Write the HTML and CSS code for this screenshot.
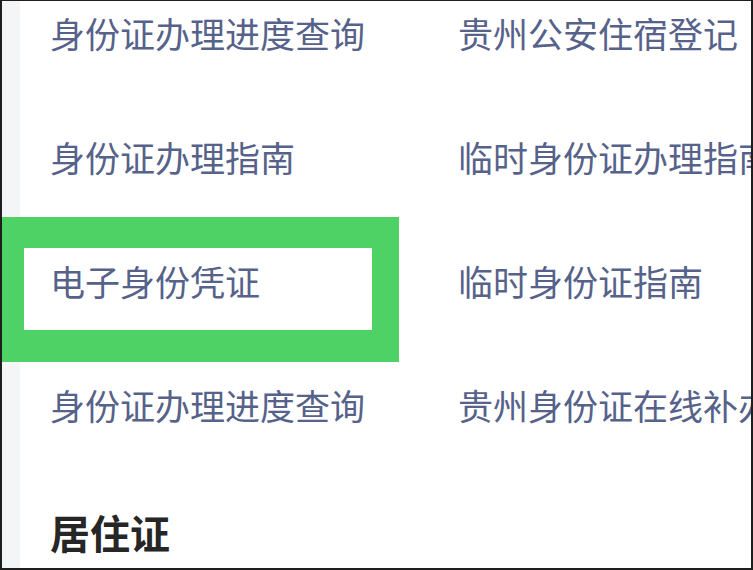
FILE: index.html
```html
<!DOCTYPE html>
<html lang="zh-CN">
<head>
<meta charset="utf-8">
<title>身份证服务</title>
<link rel="stylesheet" href="styles.css">
</head>
<body>
<div class="frame">
  <div class="rail"></div>
  <div class="content">
    <div class="links">
      <a class="link">身份证办理进度查询</a>
      <a class="link">贵州公安住宿登记</a>
      <a class="link">身份证办理指南</a>
      <a class="link">临时身份证办理指南</a>
      <a class="link">电子身份凭证</a>
      <a class="link">临时身份证指南</a>
      <a class="link">身份证办理进度查询</a>
      <a class="link">贵州身份证在线补办</a>
    </div>
    <h2 class="section-title">居住证</h2>
  </div>
  <div class="highlight"></div>
</div>
</body>
</html>
```

FILE: styles.css
```css
html, body {
  margin: 0;
  padding: 0;
  background: #ffffff;
}

.frame {
  position: relative;
  width: 753px;
  height: 570px;
  box-sizing: border-box;
  border-style: solid;
  border-color: #1e1e1e;
  border-width: 1px 2px 2px 2px;
  display: flex;
  overflow: hidden;
  background: #ffffff;
  font-family: "Noto Sans CJK SC", "Noto Sans", sans-serif;
}

.rail {
  flex: 0 0 18px;
  background: #f4f5f7;
}

.content {
  flex: 1;
  padding-left: 30px;
  margin-top: -30px;
  min-width: 0;
}

.links {
  display: grid;
  grid-template-columns: 408px auto;
  grid-auto-rows: 124px;
}

.link {
  font-size: 35px;
  line-height: 124px;
  color: #56628a;
  white-space: nowrap;
  text-decoration: none;
}

.section-title {
  margin: 0;
  font-size: 40px;
  line-height: 130px;
  font-weight: 700;
  color: #262626;
}

.highlight {
  position: absolute;
  left: -2px;
  top: 216px;
  width: 399px;
  height: 145px;
  box-sizing: border-box;
  border-style: solid;
  border-color: #4fd265;
  border-width: 31px 27px 32px 24px;
}
```
